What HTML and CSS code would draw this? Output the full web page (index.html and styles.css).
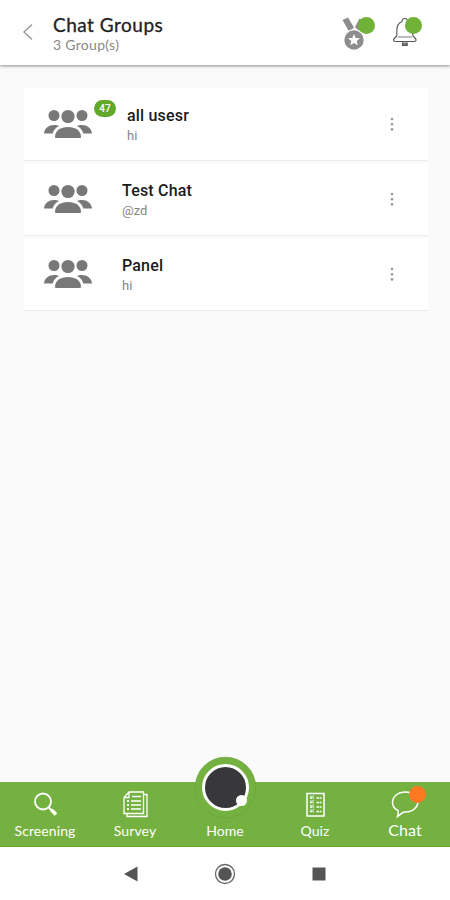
FILE: index.html
```html
<!DOCTYPE html>
<html lang="en">
<head>
<meta charset="utf-8">
<title>Chat Groups</title>
<link rel="stylesheet" href="styles.css">
</head>
<body>
<svg class="defs" width="0" height="0">
  <symbol id="group" viewBox="0 0 48 30">
    <circle cx="10" cy="6.500" r="5.500"/><circle cx="38" cy="6.500" r="5.500"/><circle cx="24" cy="7.500" r="6.600"/>
    <path d="M0 24.500C.5 19 5 16 10 16c2 0 3.600.3 5 1-3 1.600-5.500 4-6.300 7.500zM48 24.500C47.500 19 43 16 38 16c-2 0-3.600.3-5 1 3 1.600 5.500 4 6.300 7.500z"/>
    <path d="M11 28c0-6.500 5.500-10 13-10s13 3.500 13 10q0 1-1 1H12q-1 0-1-1z"/>
  </symbol>
  <symbol id="dots" viewBox="0 0 4 14"><circle cx="2" cy="2" r="1.300"/><circle cx="2" cy="7.200" r="1.300"/><circle cx="2" cy="12.400" r="1.300"/></symbol>
</svg>
<div class="app">
  <header class="header">
    <svg class="back" width="12" height="18" viewBox="0 0 12 18"><path d="M10 1.500 2 9l8 7.500"/></svg>
    <div class="heading">
      <h1>Chat Groups</h1>
      <p>3 Group(s)</p>
    </div>
    <div class="action medal">
      <svg width="40" height="40" viewBox="0 0 40 40">
        <path fill="#8d8d8d" d="m2.500 8 5.500-2.500 6 10-5 4zM19.500 6.500 15 15l4 4 6-9z"/>
        <circle cx="14" cy="28" r="10.700" fill="#fff"/>
        <circle cx="14" cy="28" r="9.700" fill="#8d8d8d"/>
        <path fill="#fff" d="m14 22 1.700 4 4.300.3-3.300 2.800 1.100 4.200-3.800-2.400-3.800 2.400 1.100-4.200L8 26.300l4.300-.3z"/>
      </svg>
      <i class="dot"></i>
    </div>
    <div class="action bell">
      <svg width="40" height="40" viewBox="0 0 40 40" fill="none" stroke="#555" stroke-width="1.200">
        <g transform="translate(-.8) scale(.94 1)">
          <path d="M11.500 9.500C8 11 6 14 6 18v5c0 2-3.500 3-3.500 5 0 1 1 1.500 2 1.500h20c1 0 2-.5 2-1.500 0-2-3.500-3-3.500-5v-5c0-4-2-7-5.500-8.500M11.500 9.500c0-4 6-4 6 0"/>
          <path d="M12 30.500v3h5v-3" fill="#777"/>
          <path d="M7 25h15" stroke="#bbb" stroke-width="2"/>
        </g>
      </svg>
      <i class="dot"></i>
    </div>
  </header>
  <main class="groups">
    <article class="card">
      <svg class="people"><use href="#group"/></svg>
      <span class="count">47</span>
      <div class="text shifted"><h2>all usesr</h2><p>hi</p></div>
      <svg class="more"><use href="#dots"/></svg>
    </article>
    <article class="card">
      <svg class="people"><use href="#group"/></svg>
      <div class="text"><h2>Test Chat</h2><p>@zd</p></div>
      <svg class="more"><use href="#dots"/></svg>
    </article>
    <article class="card">
      <svg class="people"><use href="#group"/></svg>
      <div class="text"><h2>Panel</h2><p>hi</p></div>
      <svg class="more"><use href="#dots"/></svg>
    </article>
  </main>
  <nav class="tabs">
    <a class="tab">
      <svg width="32" height="32" viewBox="0 0 32 32"><circle cx="14" cy="12.500" r="8" stroke-width="1.800"/><path d="m19.800 18.500 3 3" stroke-width="2"/><path d="m22.500 21 4.500 4.500" stroke-width="3.500"/></svg>
      <span>Screening</span>
    </a>
    <a class="tab">
      <svg width="32" height="32" viewBox="0 0 32 32" stroke-width="1.300"><path d="M10 3h14.500v21.500H5V8.500zM10 3v5.500H5M24.500 5.500H28v22H8v-3M13 7.500h9M12 12h10M12 16h10M12 20h10"/><path d="M8 12h2M8 16h2M8 20h2" stroke-width="2"/></svg>
      <span>Survey</span>
    </a>
    <a class="tab home">
      <svg class="orb" width="64" height="64" viewBox="0 0 64 64"><circle cx="32.500" cy="31.500" r="30.300" fill="#75b140" stroke="#6ba33a" stroke-width=".7"/><circle cx="32.500" cy="31.500" r="22" fill="#38383a" stroke="#fff" stroke-width="3"/><circle cx="48.500" cy="44.500" r="5.500" fill="#fff" stroke="none"/></svg>
      <span>Home</span>
    </a>
    <a class="tab">
      <svg width="32" height="32" viewBox="0 0 32 32" stroke-width="1.500"><path d="M8 4.500h17V27H8z"/><path d="M11 9h4M11 13.500h4M11 18h4M11 22.500h4M17.500 9h5M17.500 13.500h5M17.500 18h5M17.500 22.500h5" stroke-dasharray="2.500 .7"/><path d="m11 7 2 1 2-1.500M11 11.500l2 1 2-1.500M11 16l2 1 2-1.500M11 20.500l2 1 2-1.500" stroke-width=".8"/></svg>
      <span>Quiz</span>
    </a>
    <a class="tab chat">
      <svg width="32" height="32" viewBox="0 0 32 32" stroke-width="1.500"><path d="M9 21.500C5 19.500 3.500 17 3.500 13.500c0-6 5.500-10.500 13-10.500s12.500 4 12.500 9.500-5 10.500-12 10.500h-2c-2 .5-4 3-6.500 4.500.8-2 1-4 .5-6z"/></svg>
      <i class="alert"></i>
      <span>Chat</span>
    </a>
  </nav>
  <footer class="system">
    <svg width="14" height="16" viewBox="0 0 14 16"><path d="M0 8 13.500.5v15z"/></svg>
    <svg width="22" height="22" viewBox="0 0 22 22"><circle cx="11" cy="11" r="9.500" fill="none" stroke="#666" stroke-width="1.300"/><circle cx="11" cy="11" r="6.800"/></svg>
    <svg width="14" height="14" viewBox="0 0 14 14"><path d="M.5.5h13v13H.5z"/></svg>
  </footer>
</div>
</body>
</html>
```
FILE: styles.css
```css
* { box-sizing: border-box; margin: 0; padding: 0; }
body { background: #fafafa; font-family: Roboto, sans-serif; }
.defs { position: absolute; }
.app { display: flex; flex-direction: column; width: 450px; height: 900px; overflow: hidden; }
.header { position: relative; z-index: 1; display: flex; height: 65px; background: #fff; box-shadow: 0 1px 3px rgba(0,0,0,.45); }
.back { margin: 23px 0 0 22px; fill: none; stroke: #999; stroke-width: 1.400; }
.heading { width: 285px; margin: 13px 0 0 19px; font-family: Lato, sans-serif; white-space: nowrap; }
.heading h1 { font-size: 19px; line-height: 23px; font-weight: 400; color: #222; letter-spacing: .5px; -webkit-text-stroke: .3px #222; }
.heading p { font-size: 14px; line-height: 17px; color: #888; letter-spacing: .3px; }
.action { position: relative; width: 40px; height: 40px; margin: 12px 10px 0 2px; }
.dot { position: absolute; left: 18px; top: 5px; width: 17px; height: 17px; border-radius: 50%; background: #70b137; }
.bell .dot { left: 13px; }
.groups { display: flex; flex: 1; flex-direction: column; gap: 2px; padding: 23px 22px 0 24px; }
.card { position: relative; display: flex; height: 73px; background: #fff; border-bottom: 1px solid #ebebeb; }
.people { width: 48px; height: 30px; margin: 21px 0 0 20px; fill: #787878; }
.count { position: absolute; left: 70px; top: 12px; width: 22px; height: 17px; border-radius: 9px; background: #62a92b; color: #fff; font: 500 10px/17px Roboto, sans-serif; text-align: center; }
.text { width: 262px; margin: 18px 0 0 30px; }
.shifted { width: 257px; margin-left: 35px; }
.text h2 { font-size: 16px; line-height: 20px; font-weight: 500; color: #1b1b1b; letter-spacing: .18px; }
.text p { font-size: 13px; line-height: 20px; color: #858585; }
.more { width: 4px; height: 14px; margin: 29px 0 0 6px; fill: #999; }
.tabs { position: relative; z-index: 1; display: flex; height: 65px; background: #75b140; border-bottom: 1px solid #67a52e; color: #fff; }
.tab { position: relative; display: flex; flex: 1; flex-direction: column; align-items: center; padding-top: 7px; font: 14px/18px Lato, sans-serif; letter-spacing: .1px; }
.tab svg { fill: none; stroke: #fff; }
.tab .orb { margin-top: -33px; margin-bottom: 1px; }
.chat { font-size: 16px; }
.chat span { margin-top: 0; }
.tab:not(.chat) span { margin-top: 1px; }
.alert { position: absolute; left: 49px; top: 4px; width: 17px; height: 17px; border-radius: 50%; background: #fc7922; }
.system { display: flex; align-items: center; height: 53px; padding: 0 124px 0 124px; justify-content: space-between; background: #fff; fill: #555; }
```
